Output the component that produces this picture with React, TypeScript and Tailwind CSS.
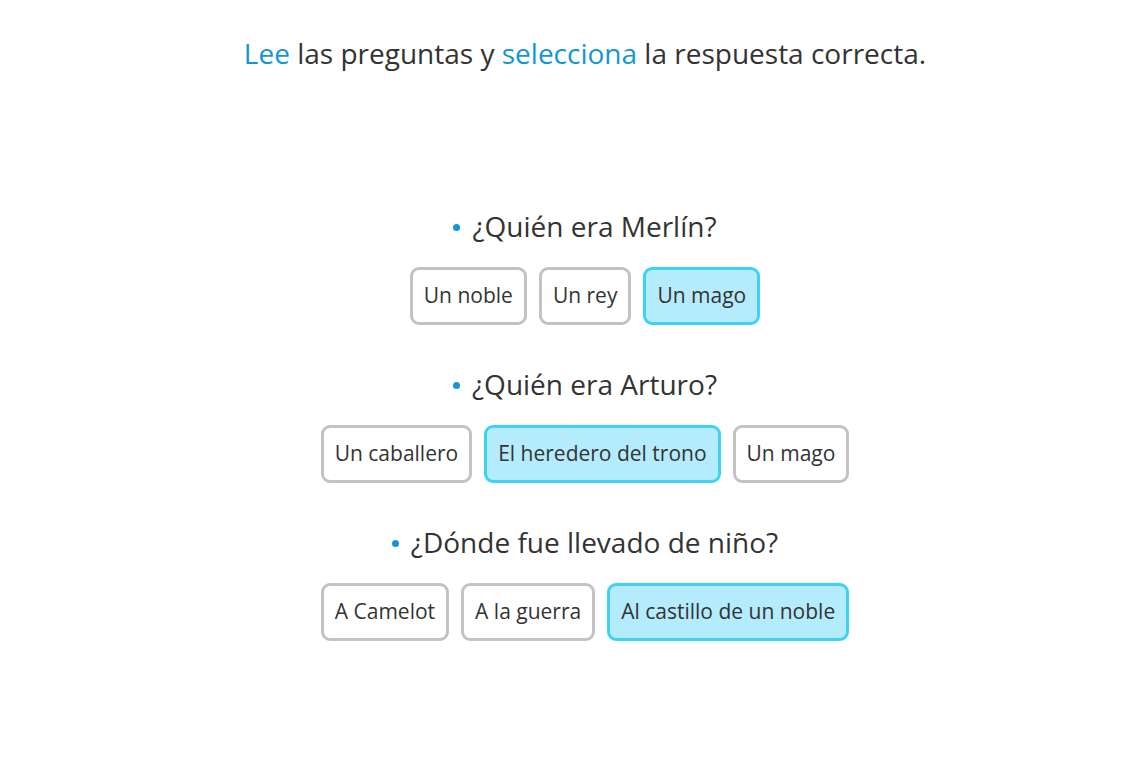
const questions = [
  { q: '¿Quién era Merlín?', options: ['Un noble', 'Un rey', 'Un mago'], selected: 2 },
  { q: '¿Quién era Arturo?', options: ['Un caballero', 'El heredero del trono', 'Un mago'], selected: 1 },
  { q: '¿Dónde fue llevado de niño?', options: ['A Camelot', 'A la guerra', 'Al castillo de un noble'], selected: 2 },
];

export default function App() {
  return (
    <div
      className="min-h-[773px] w-full bg-white pl-[48px] text-[#333333]"
      style={{ fontFamily: '"Open Sans", "Noto Sans", sans-serif' }}
    >
      <h1 className="pt-[35px] text-center text-[28px] leading-[36px] font-normal">
        <span className="text-[#1496d6]">Lee</span> las preguntas y{' '}
        <span className="text-[#1496d6]">selecciona</span> la respuesta correcta.
      </h1>

      <div className="mt-[137px] flex flex-col items-center gap-[41px]">
        {questions.map((item) => (
          <div key={item.q} className="flex flex-col items-center">
            <p className="text-[28px] leading-[36px] flex items-center">
              <span className="inline-block w-[7px] h-[7px] rounded-full bg-[#1496d6] mr-[12px] mt-[3px]" />
              {item.q}
            </p>
            <div className="mt-[23px] flex gap-[12px]">
              {item.options.map((opt, i) => (
                <button
                  key={opt}
                  className={`h-[58px] px-[11px] rounded-[9px] border-[3px] text-[21px] text-[#333333] ${
                    i === item.selected
                      ? 'bg-[#b5ecfd] border-[#3ed3f4]'
                      : 'bg-white border-[#c3c3c3]'
                  }`}
                >
                  {opt}
                </button>
              ))}
            </div>
          </div>
        ))}
      </div>
    </div>
  );
}
